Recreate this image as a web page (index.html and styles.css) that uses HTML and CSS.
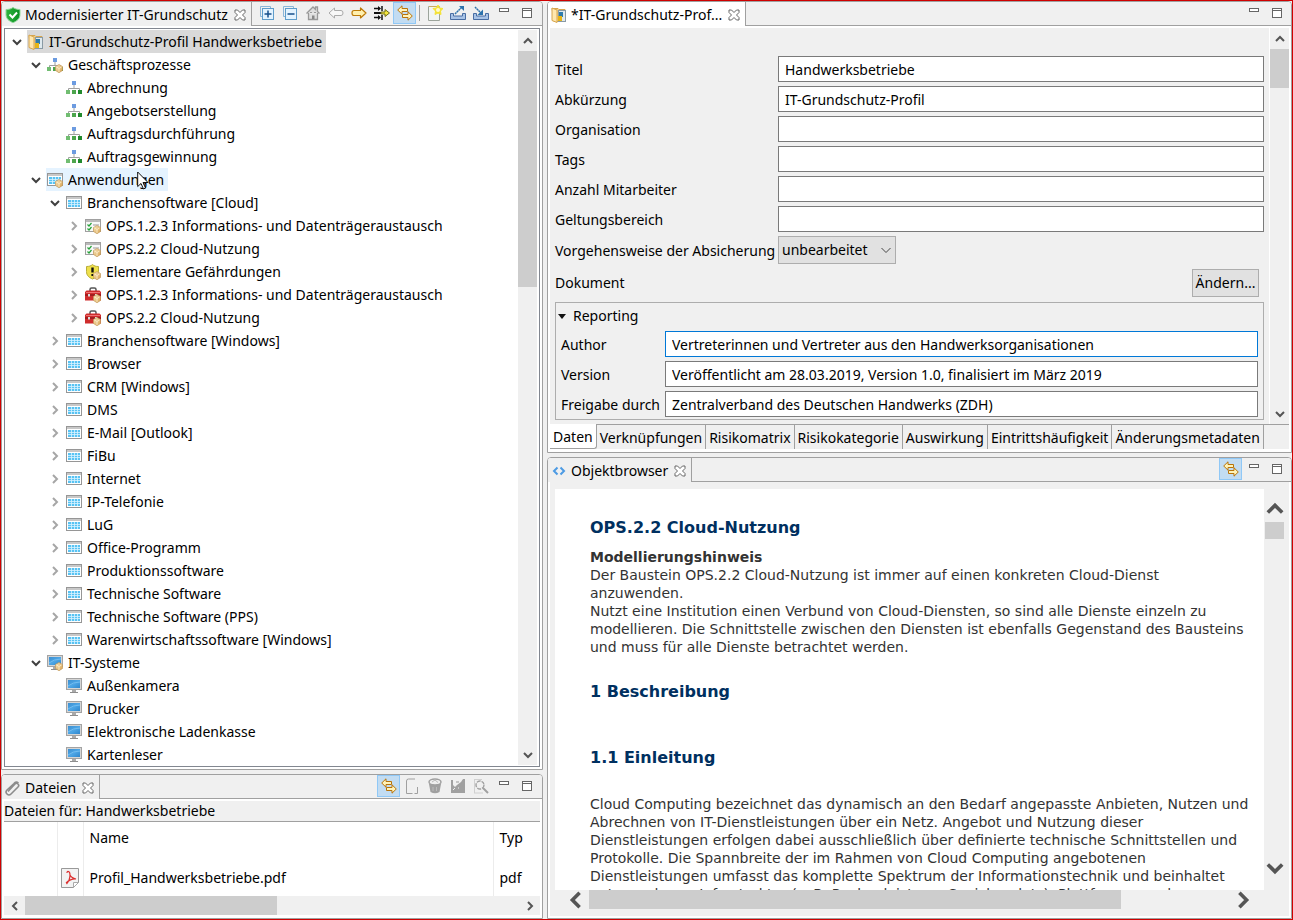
FILE: index.html
```html
<!DOCTYPE html>
<html lang="de">
<head>
<meta charset="utf-8">
<title>Modernisierter IT-Grundschutz</title>
<link rel="stylesheet" href="styles.css">
</head>
<body>
<svg class="sprite" aria-hidden="true">
  <defs>
    <linearGradient id="g-screen" x1="0" y1="0" x2="1" y2="1"><stop offset="0" stop-color="#3d8fd0"/><stop offset=".5" stop-color="#4da6e6"/><stop offset="1" stop-color="#2f86cc"/></linearGradient>
    <linearGradient id="g-gold" x1="0" y1="0" x2="1" y2="1"><stop offset="0" stop-color="#f9e8c0"/><stop offset="1" stop-color="#d6a04c"/></linearGradient>
    <linearGradient id="g-green" x1="0" y1="0" x2="1" y2="0"><stop offset="0" stop-color="#2fb53f"/><stop offset="1" stop-color="#0b8f22"/></linearGradient>
  </defs>
  <symbol id="i-group" viewBox="0 0 16 16"><path d="M12 7.500l3.500 2v4L12 15.700l-3.500-2.200v-4z" fill="url(#g-gold)" stroke="#c39a5a" stroke-width=".7" stroke-linejoin="round"/><path d="M9.500 10l2.500 1.500 2.500-1.500M12 11.500V15" stroke="#fff3d6" stroke-width=".8" fill="none"/></symbol>
  <symbol id="i-shield" viewBox="0 0 16 16"><path d="M8 .5C6 2 3.500 2.500 1 2.500v5C1 11.500 4 14 8 15.700 12 14 15 11.500 15 7.500v-5C12.500 2.500 10 2 8 .5z" fill="url(#g-green)" stroke="#8fd59a"/><path d="M4.500 7.500l3 3 4.500-5" fill="none" stroke="#fff" stroke-width="2"/></symbol>
  <symbol id="i-folder" viewBox="0 0 16 16"><path d="M1 1.500h6l1 1h6v12H3z" fill="#f2cf82" stroke="#d6a54e"/><rect x="7.500" y="3.500" width="7" height="11" fill="#dfe9ee" stroke="#8a9aa4"/><rect x="8" y="5" width="4" height="5" fill="#2f7cab"/><rect x="7" y="9" width="4" height="5" fill="#e6b416"/><path d="M1 1l5 2v12.500l-5-2z" fill="#ffe7ae" stroke="#d6a54e"/></symbol>
  <symbol id="i-proc" viewBox="0 0 16 16"><path d="M8 4v5M2.500 11V8.500h11V11" fill="none" stroke="#a0a0a0"/><rect x="6" y="1" width="4" height="4" fill="#6c9be0"/><rect x="0" y="10" width="4" height="4" fill="#71bd71"/><rect x="6" y="10" width="4" height="4" fill="#4da54d"/><rect x="12" y="10" width="4" height="4" fill="#218a2d"/></symbol>
  <symbol id="i-app" viewBox="0 0 16 16"><rect x=".5" y="1.500" width="15" height="12" fill="#fff" stroke="#969696"/><path d="M1 3h14" stroke="#c8c8c8" stroke-width="2"/><path d="M2 5h12v7H2z" fill="#58c3f3"/><path d="M2 7.500h12M2 9.500h12M5.500 5V12M8.500 5V12M11.500 5V12" stroke="#d8f2ff" stroke-width=".8"/></symbol>
  <symbol id="i-check" viewBox="0 0 16 16"><rect x=".5" y="1.500" width="15" height="12" fill="#f8f8f8" stroke="#a0a0a0"/><path d="M1 3h14" stroke="#bababa" stroke-width="2"/><path d="M2.500 6.500l1.500 1.500 2.500-3M2.500 10.500L4 12l2.500-3" fill="none" stroke="#27a33a" stroke-width="1.200"/><path d="M8 7h6M8 11h3" stroke="#999"/></symbol>
  <symbol id="i-threat" viewBox="0 0 16 16"><path d="M7.500.5C6 2 4 2.500 1.500 2.500v5c0 4 2.500 6 6 7.500 3.500-1.500 6-3.500 6-7.500v-5C11 2.500 9 2 7.500.5z" fill="#eee04c" stroke="#b9ad38"/><path d="M7.500 3.500v5" stroke="#111" stroke-width="2.400"/><path d="M7.500 10v2" stroke="#111" stroke-width="2.200"/></symbol>
  <symbol id="i-case" viewBox="0 0 16 16"><path d="M5 4.500V2.500Q5 1 6.500 1h3Q11 1 11 2.500v2" fill="none" stroke="#555" stroke-width="1.500"/><path d="M0 5l1.500-1.500h13L16 5v8.500H0z" fill="#cf2c2c"/><path d="M0 8h16" stroke="#811717" stroke-width="1.200"/><path d="M1 5.500h14" stroke="#ee7272"/><path d="M3 7h2v2.500H3zM10 7h2v2.500h-2z" fill="#ddd"/></symbol>
  <symbol id="i-pc" viewBox="0 0 16 16"><rect x=".5" y=".5" width="15" height="11" fill="#d5d5d5" stroke="#a3a3a3"/><rect x="2" y="2" width="12" height="8" fill="url(#g-screen)"/><path d="M2 8Q7 4 14 4" stroke="#74bdf0" fill="none"/><path d="M6 12h4v2H6z" fill="#aaa"/><path d="M4 14.500h8" stroke="#8e8e8e"/></symbol>
  <symbol id="i-close" viewBox="0 0 12 12"><path d="M1 1h2.500L6 3.500 8.500 1H11v2.500L8.500 6 11 8.500V11H8.500L6 8.500 3.500 11H1V8.500L3.500 6 1 3.500z" fill="#fff" stroke="#666"/></symbol>
  <symbol id="i-expand" viewBox="0 0 16 16"><path d="M1.500 11.500v-10h10v2M1.500 11.500h2" fill="none" stroke="#8ab6d9"/><rect x="3.500" y="3.500" width="11" height="11" fill="#e3f3ff" stroke="#5f9dcb"/><path d="M5.500 9h7M9 5.500v7" stroke="#164f8c" stroke-width="1.500"/></symbol>
  <symbol id="i-collapse" viewBox="0 0 16 16"><path d="M1.500 11.500v-10h10v2M1.500 11.500h2" fill="none" stroke="#8ab6d9"/><rect x="3.500" y="3.500" width="11" height="11" fill="#e3f3ff" stroke="#5f9dcb"/><path d="M5.500 9h7" stroke="#164f8c" stroke-width="1.500"/></symbol>
  <symbol id="i-home" viewBox="0 0 16 16"><path d="M1.500 8.500L8 2l2.500 2.500V2h2v4.500l2 2M3.500 8v6.500h9V8" fill="#dedede" stroke="#999" stroke-width="1.300"/><path d="M7 14v-3.500h2.500V14" fill="#888"/><path d="M5 7.500h2M9 7.500h2" stroke="#999"/></symbol>
  <symbol id="i-back" viewBox="0 0 16 16"><path d="M1 8l5.500-5V5.500H13q2 0 2 2.500t-2 2.500H6.500V13z" fill="#f8f8f8" stroke="#aaa" stroke-linejoin="round"/></symbol>
  <symbol id="i-fwd" viewBox="0 0 16 16"><path d="M15 8L9.500 3V5.500H3Q1 5.500 1 8t2 2.500h6.500V13z" fill="#fff0ae" stroke="#bd7a08" stroke-width="1.200" stroke-linejoin="round"/></symbol>
  <symbol id="i-filter" viewBox="0 0 16 16"><path d="M0 3.500h6M0 12.500h6M8 1v5M8 10v5" stroke="#111" stroke-width="1.500"/><path d="M4 1l3 2.500L4 6zM4 10l3 2.500L4 15z" fill="#111"/><path d="M0 8h8" stroke="#111" stroke-width="2"/><path d="M7 7h4V4.500L15.500 8 11 11.500V9H7z" fill="#f3e63d" stroke="#6c6a19"/></symbol>
  <symbol id="i-link" viewBox="0 0 16 16"><path d="M.7 5L5 .8v2.700h5.500v3H5v2.700z" fill="#fff3b8" stroke="#b8730a" stroke-linejoin="round"/><path d="M15.300 11L11 6.800v2.700H5.500v3H11v2.700z" fill="#fff3b8" stroke="#b8730a" stroke-linejoin="round"/></symbol>
  <symbol id="i-new" viewBox="0 0 16 16"><path d="M1.500 1.500h11v14h-11z" fill="#f2f5f3" stroke="#9ca49c"/><path d="M2 1.500h8" stroke="#c8ab61"/><path d="M11 0l1.500 3 3.500.5-2.500 2.500.5 3.500-3-1.500L8 9.500 8.500 6 6 3.500 9.500 3z" fill="#f4e234" stroke="#f4e234"/><circle cx="11" cy="5" r="2" fill="#fffbd0"/></symbol>
  <symbol id="i-export" viewBox="0 0 16 16"><path d="M.5 8.500h3V11h9V8.500h3v6H.5z" fill="#a8c3e6" stroke="#496da3"/><path d="M5 9l7-7" stroke="#2c72ac" stroke-width="1.500" stroke-dasharray="2 .5"/><path d="M9 1h5v5z" fill="#2c72ac"/></symbol>
  <symbol id="i-import" viewBox="0 0 16 16"><path d="M.5 8.500h3V11h9V8.500h3v6H.5z" fill="#a8c3e6" stroke="#496da3"/><path d="M2 2l6 6" stroke="#2c72ac" stroke-width="1.500" stroke-dasharray="2 .5"/><path d="M10 4.500V10H4.500z" fill="#2c72ac"/></symbol>
  <symbol id="i-min" viewBox="0 0 16 16"><rect x="3.500" y="3.500" width="9" height="3" fill="#fff" stroke="#666"/></symbol>
  <symbol id="i-max" viewBox="0 0 16 16"><rect x="3.500" y="3.500" width="9" height="9" fill="#fff" stroke="#666"/><path d="M3 5.500h10" stroke="#666"/></symbol>
  <symbol id="i-clip" viewBox="0 0 16 16"><path d="M3 11.500l7-7.500q1.500-1.500 3 0t0 3l-7 7q-2 2-4 0t0-4L9 3.500q2-2.500 4.500-.5" fill="none" stroke="#8c8c8c" stroke-width="1.600"/></symbol>
  <symbol id="i-page" viewBox="0 0 16 16"><path d="M2.500 15.500V3q0-2 2-2H11M2.500 15.500h6M10.500 15.500h3V9" fill="none" stroke="#a0a0a0"/></symbol>
  <symbol id="i-trash" viewBox="0 0 16 16"><path d="M2 6h12l-1.500 8q-4.500 2.500-9 0z" fill="#a0a0a0"/><ellipse cx="8" cy="4" rx="6" ry="3" fill="#eee" stroke="#a0a0a0" stroke-width="1.500"/><path d="M5 4l3-2 3 2.500M6 9v4M9.500 9v4" stroke="#bbb" fill="none"/></symbol>
  <symbol id="i-chart" viewBox="0 0 16 16"><path d="M1 2v13h14V1h-2l-2 3-4 3-2 2-2-2V2z" fill="#a0a0a0"/><path d="M6 3h3v2H6z" fill="#c4c4c4"/><path d="M3 12l2-2M8 10h1" stroke="#eee"/></symbol>
  <symbol id="i-search" viewBox="0 0 16 16"><path d="M1.500 1v14M1 1.500h8M1 15h9" stroke="#d0d0d0"/><circle cx="7" cy="7" r="4" fill="none" stroke="#a0a0a0" stroke-width="1.400" stroke-dasharray="4 1"/><path d="M10 10l5 5" stroke="#a0a0a0" stroke-width="2"/></symbol>
  <symbol id="i-code" viewBox="0 0 16 16"><path d="M6.500 4.500L3 8l3.500 3.500M9.500 4.500L13 8l-3.500 3.500" fill="none" stroke="#4d9be4" stroke-width="2"/></symbol>
  <symbol id="i-pdf" viewBox="0 0 18 20"><path d="M.5.5h17v14l-5 5H.5z" fill="#f3f3f3" stroke="#999"/><path d="M12.500 19.500v-5h5z" fill="#fff" stroke="#aaa"/><path d="M6 5q0-2 1.500-1.500T9 7q1.500 3 6 4-5-.5-10 4M9 7q0 5-3.500 9" fill="none" stroke="#dc3030" stroke-width="1.200"/></symbol>
  <symbol id="i-cursor" viewBox="0 0 12 19"><path d="M.7 1v14.500l3.300-3 2.500 5.500 2-1L6 11.500h5z" fill="#fff" stroke="#111"/></symbol>
  <symbol id="i-chev" viewBox="0 0 10 10"><path d="M1 3l4 4 4-4" fill="none" stroke="currentColor" stroke-width="2"/></symbol>
  <symbol id="i-chev-thin" viewBox="0 0 10 10"><path d="M.5 3L5 7.500 9.500 3" fill="none" stroke="currentColor"/></symbol>
</svg>

<main class="workbench">
  <div class="column column-left">
    <section class="part">
      <header class="part-head">
        <div class="tab">
          <svg class="icon"><use href="#i-shield"/></svg><span>Modernisierter IT-Grundschutz</span>
          <button class="close" aria-label="Schließen"><svg><use href="#i-close"/></svg></button>
        </div>
        <div class="tools">
          <button aria-label="Alle aufklappen"><svg class="icon"><use href="#i-expand"/></svg></button>
          <button aria-label="Alle zuklappen"><svg class="icon"><use href="#i-collapse"/></svg></button>
          <button aria-label="Start"><svg class="icon"><use href="#i-home"/></svg></button>
          <button aria-label="Zurück"><svg class="icon"><use href="#i-back"/></svg></button>
          <button aria-label="Vorwärts"><svg class="icon"><use href="#i-fwd"/></svg></button>
          <button aria-label="Filter"><svg class="icon"><use href="#i-filter"/></svg></button>
          <button class="on" aria-label="Mit Editor verknüpfen"><svg class="icon"><use href="#i-link"/></svg></button>
          <span class="sep"></span>
          <button aria-label="Neu"><svg class="icon"><use href="#i-new"/></svg></button>
          <button aria-label="Exportieren"><svg class="icon"><use href="#i-export"/></svg></button>
          <button aria-label="Importieren"><svg class="icon"><use href="#i-import"/></svg></button>
          <button aria-label="Minimieren"><svg class="icon"><use href="#i-min"/></svg></button>
          <button aria-label="Maximieren"><svg class="icon"><use href="#i-max"/></svg></button>
        </div>
      </header>
      <div class="tree-box">
        <ul class="tree">
          <li><button class="twist open" aria-label="Zuklappen"><svg><use href="#i-chev"/></svg></button><span class="item selected"><svg class="icon"><use href="#i-folder"/></svg>IT-Grundschutz-Profil Handwerksbetriebe</span></li>
          <li class="l1"><button class="twist open" aria-label="Zuklappen"><svg><use href="#i-chev"/></svg></button><span class="item"><svg class="icon"><use href="#i-proc"/><use href="#i-group"/></svg>Geschäftsprozesse</span></li>
          <li class="l2 leaf"><span class="item"><svg class="icon"><use href="#i-proc"/></svg>Abrechnung</span></li>
          <li class="l2 leaf"><span class="item"><svg class="icon"><use href="#i-proc"/></svg>Angebotserstellung</span></li>
          <li class="l2 leaf"><span class="item"><svg class="icon"><use href="#i-proc"/></svg>Auftragsdurchführung</span></li>
          <li class="l2 leaf"><span class="item"><svg class="icon"><use href="#i-proc"/></svg>Auftragsgewinnung</span></li>
          <li class="l1"><button class="twist open" aria-label="Zuklappen"><svg><use href="#i-chev"/></svg></button><span class="item hover"><svg class="icon"><use href="#i-app"/><use href="#i-group"/></svg>Anwendungen<svg class="cursor"><use href="#i-cursor"/></svg></span></li>
          <li class="l2"><button class="twist open" aria-label="Zuklappen"><svg><use href="#i-chev"/></svg></button><span class="item"><svg class="icon"><use href="#i-app"/></svg>Branchensoftware [Cloud]</span></li>
          <li class="l3"><button class="twist" aria-label="Aufklappen"><svg><use href="#i-chev"/></svg></button><span class="item"><svg class="icon"><use href="#i-check"/><use href="#i-group"/></svg>OPS.1.2.3 Informations- und Datenträgeraustausch</span></li>
          <li class="l3"><button class="twist" aria-label="Aufklappen"><svg><use href="#i-chev"/></svg></button><span class="item"><svg class="icon"><use href="#i-check"/><use href="#i-group"/></svg>OPS.2.2 Cloud-Nutzung</span></li>
          <li class="l3"><button class="twist" aria-label="Aufklappen"><svg><use href="#i-chev"/></svg></button><span class="item"><svg class="icon"><use href="#i-threat"/><use href="#i-group"/></svg>Elementare Gefährdungen</span></li>
          <li class="l3"><button class="twist" aria-label="Aufklappen"><svg><use href="#i-chev"/></svg></button><span class="item"><svg class="icon"><use href="#i-case"/><use href="#i-group"/></svg>OPS.1.2.3 Informations- und Datenträgeraustausch</span></li>
          <li class="l3"><button class="twist" aria-label="Aufklappen"><svg><use href="#i-chev"/></svg></button><span class="item"><svg class="icon"><use href="#i-case"/><use href="#i-group"/></svg>OPS.2.2 Cloud-Nutzung</span></li>
          <li class="l2"><button class="twist" aria-label="Aufklappen"><svg><use href="#i-chev"/></svg></button><span class="item"><svg class="icon"><use href="#i-app"/></svg>Branchensoftware [Windows]</span></li>
          <li class="l2"><button class="twist" aria-label="Aufklappen"><svg><use href="#i-chev"/></svg></button><span class="item"><svg class="icon"><use href="#i-app"/></svg>Browser</span></li>
          <li class="l2"><button class="twist" aria-label="Aufklappen"><svg><use href="#i-chev"/></svg></button><span class="item"><svg class="icon"><use href="#i-app"/></svg>CRM [Windows]</span></li>
          <li class="l2"><button class="twist" aria-label="Aufklappen"><svg><use href="#i-chev"/></svg></button><span class="item"><svg class="icon"><use href="#i-app"/></svg>DMS</span></li>
          <li class="l2"><button class="twist" aria-label="Aufklappen"><svg><use href="#i-chev"/></svg></button><span class="item"><svg class="icon"><use href="#i-app"/></svg>E-Mail [Outlook]</span></li>
          <li class="l2"><button class="twist" aria-label="Aufklappen"><svg><use href="#i-chev"/></svg></button><span class="item"><svg class="icon"><use href="#i-app"/></svg>FiBu</span></li>
          <li class="l2"><button class="twist" aria-label="Aufklappen"><svg><use href="#i-chev"/></svg></button><span class="item"><svg class="icon"><use href="#i-app"/></svg>Internet</span></li>
          <li class="l2"><button class="twist" aria-label="Aufklappen"><svg><use href="#i-chev"/></svg></button><span class="item"><svg class="icon"><use href="#i-app"/></svg>IP-Telefonie</span></li>
          <li class="l2"><button class="twist" aria-label="Aufklappen"><svg><use href="#i-chev"/></svg></button><span class="item"><svg class="icon"><use href="#i-app"/></svg>LuG</span></li>
          <li class="l2"><button class="twist" aria-label="Aufklappen"><svg><use href="#i-chev"/></svg></button><span class="item"><svg class="icon"><use href="#i-app"/></svg>Office-Programm</span></li>
          <li class="l2"><button class="twist" aria-label="Aufklappen"><svg><use href="#i-chev"/></svg></button><span class="item"><svg class="icon"><use href="#i-app"/></svg>Produktionssoftware</span></li>
          <li class="l2"><button class="twist" aria-label="Aufklappen"><svg><use href="#i-chev"/></svg></button><span class="item"><svg class="icon"><use href="#i-app"/></svg>Technische Software</span></li>
          <li class="l2"><button class="twist" aria-label="Aufklappen"><svg><use href="#i-chev"/></svg></button><span class="item"><svg class="icon"><use href="#i-app"/></svg>Technische Software (PPS)</span></li>
          <li class="l2"><button class="twist" aria-label="Aufklappen"><svg><use href="#i-chev"/></svg></button><span class="item"><svg class="icon"><use href="#i-app"/></svg>Warenwirtschaftssoftware [Windows]</span></li>
          <li class="l1"><button class="twist open" aria-label="Zuklappen"><svg><use href="#i-chev"/></svg></button><span class="item"><svg class="icon"><use href="#i-pc"/><use href="#i-group"/></svg>IT-Systeme</span></li>
          <li class="l2 leaf"><span class="item"><svg class="icon"><use href="#i-pc"/></svg>Außenkamera</span></li>
          <li class="l2 leaf"><span class="item"><svg class="icon"><use href="#i-pc"/></svg>Drucker</span></li>
          <li class="l2 leaf"><span class="item"><svg class="icon"><use href="#i-pc"/></svg>Elektronische Ladenkasse</span></li>
          <li class="l2 leaf"><span class="item"><svg class="icon"><use href="#i-pc"/></svg>Kartenleser</span></li>
        </ul>
        <div class="scroll scroll-v">
          <button class="up" aria-label="Nach oben"><svg><use href="#i-chev"/></svg></button>
          <div class="track"><div class="thumb thumb-tree"></div></div>
          <button aria-label="Nach unten"><svg><use href="#i-chev"/></svg></button>
        </div>
      </div>
    </section>

    <section class="part">
      <header class="part-head">
        <div class="tab">
          <svg class="icon"><use href="#i-clip"/></svg><span>Dateien</span>
          <button class="close" aria-label="Schließen"><svg><use href="#i-close"/></svg></button>
        </div>
        <div class="tools">
          <button class="on" aria-label="Mit Auswahl verknüpfen"><svg class="icon"><use href="#i-link"/></svg></button>
          <button aria-label="Neue Datei"><svg class="icon"><use href="#i-page"/></svg></button>
          <button aria-label="Löschen"><svg class="icon"><use href="#i-trash"/></svg></button>
          <button aria-label="Speichern"><svg class="icon"><use href="#i-chart"/></svg></button>
          <button aria-label="Suchen"><svg class="icon"><use href="#i-search"/></svg></button>
          <button aria-label="Minimieren"><svg class="icon"><use href="#i-min"/></svg></button>
          <button aria-label="Maximieren"><svg class="icon"><use href="#i-max"/></svg></button>
        </div>
      </header>
      <div class="files">
        <p class="files-for">Dateien für: Handwerksbetriebe</p>
        <table>
          <colgroup><col class="c-blank"><col class="c-icon"><col><col class="c-type"></colgroup>
          <thead><tr><th></th><th></th><th>Name</th><th>Typ</th></tr></thead>
          <tbody><tr><td></td><td><svg class="pdf"><use href="#i-pdf"/></svg></td><td>Profil_Handwerksbetriebe.pdf</td><td>pdf</td></tr></tbody>
        </table>
        <div class="scroll scroll-h">
          <button class="left" aria-label="Nach links"><svg><use href="#i-chev"/></svg></button>
          <div class="track"><div class="thumb thumb-files"></div></div>
          <button class="right" aria-label="Nach rechts"><svg><use href="#i-chev"/></svg></button>
        </div>
      </div>
    </section>
  </div>

  <div class="column column-right">
    <section class="part">
      <header class="part-head">
        <div class="tab tab-white">
          <svg class="icon"><use href="#i-folder"/></svg><span>*IT-Grundschutz-Prof...</span>
          <button class="close" aria-label="Schließen"><svg><use href="#i-close"/></svg></button>
        </div>
        <div class="tools">
          <button aria-label="Minimieren"><svg class="icon"><use href="#i-min"/></svg></button>
          <button aria-label="Maximieren"><svg class="icon"><use href="#i-max"/></svg></button>
        </div>
      </header>
      <div class="editor">
        <form class="form">
          <div class="field"><label for="titel">Titel</label><input id="titel" type="text" value="Handwerksbetriebe"></div>
          <div class="field"><label for="abk">Abkürzung</label><input id="abk" type="text" value="IT-Grundschutz-Profil"></div>
          <div class="field"><label for="org">Organisation</label><input id="org" type="text"></div>
          <div class="field"><label for="tags">Tags</label><input id="tags" type="text"></div>
          <div class="field"><label for="anzahl">Anzahl Mitarbeiter</label><input id="anzahl" type="text"></div>
          <div class="field"><label for="geltung">Geltungsbereich</label><input id="geltung" type="text"></div>
          <div class="field field-combo"><label for="vorgehen">Vorgehensweise der Absicherung</label><span class="combo"><select id="vorgehen"><option>unbearbeitet</option></select><svg><use href="#i-chev-thin"/></svg></span></div>
          <div class="field field-doc"><span>Dokument</span><button type="button" class="push">Ändern...</button></div>
          <div class="group">
            <button type="button" class="group-title"><span class="caret"></span>Reporting</button>
            <div class="field"><label for="author">Author</label><input id="author" class="focused" type="text" value="Vertreterinnen und Vertreter aus den Handwerksorganisationen"></div>
            <div class="field"><label for="version">Version</label><input id="version" type="text" value="Veröffentlicht am 28.03.2019, Version 1.0, finalisiert im März 2019"></div>
            <div class="field"><label for="freigabe">Freigabe durch</label><input id="freigabe" type="text" value="Zentralverband des Deutschen Handwerks (ZDH)"></div>
          </div>
        </form>
        <div class="scroll scroll-v">
          <button class="up" aria-label="Nach oben"><svg><use href="#i-chev"/></svg></button>
          <div class="track"><div class="thumb thumb-form"></div></div>
          <button aria-label="Nach unten"><svg><use href="#i-chev"/></svg></button>
        </div>
      </div>
      <nav class="pages">
        <button class="active">Daten</button><button>Verknüpfungen</button><button>Risikomatrix</button><button>Risikokategorie</button><button>Auswirkung</button><button>Eintrittshäufigkeit</button><button>Änderungsmetadaten</button>
      </nav>
    </section>

    <section class="part">
      <header class="part-head">
        <div class="tab">
          <svg class="icon"><use href="#i-code"/></svg><span>Objektbrowser</span>
          <button class="close" aria-label="Schließen"><svg><use href="#i-close"/></svg></button>
        </div>
        <div class="tools">
          <button class="on" aria-label="Mit Editor verknüpfen"><svg class="icon"><use href="#i-link"/></svg></button>
          <button aria-label="Minimieren"><svg class="icon"><use href="#i-min"/></svg></button>
          <button aria-label="Maximieren"><svg class="icon"><use href="#i-max"/></svg></button>
        </div>
      </header>
      <div class="browser">
        <article class="doc">
          <h1>OPS.2.2 Cloud-Nutzung</h1>
          <h2>Modellierungshinweis</h2>
          <p>Der Baustein OPS.2.2 Cloud-Nutzung ist immer auf einen konkreten Cloud-Dienst anzuwenden.<br>Nutzt eine Institution einen Verbund von Cloud-Diensten, so sind alle Dienste einzeln zu modellieren. Die Schnittstelle zwischen den Diensten ist ebenfalls Gegenstand des Bausteins und muss für alle Dienste betrachtet werden.</p>
          <h1>1 Beschreibung</h1>
          <h1>1.1 Einleitung</h1>
          <p>Cloud Computing bezeichnet das dynamisch an den Bedarf angepasste Anbieten, Nutzen und Abrechnen von IT-Dienstleistungen über ein Netz. Angebot und Nutzung dieser Dienstleistungen erfolgen dabei ausschließlich über definierte technische Schnittstellen und Protokolle. Die Spannbreite der im Rahmen von Cloud Computing angebotenen Dienstleistungen umfasst das komplette Spektrum der Informationstechnik und beinhaltet unter anderem Infrastruktur (z. B. Rechenleistung, Speicherplatz), Plattformen und</p>
        </article>
        <div class="scroll scroll-v large">
          <button class="up" aria-label="Nach oben"><svg><use href="#i-chev"/></svg></button>
          <div class="track"><div class="thumb thumb-doc-v"></div></div>
          <button aria-label="Nach unten"><svg><use href="#i-chev"/></svg></button>
        </div>
        <div class="scroll scroll-h large">
          <button class="left" aria-label="Nach links"><svg><use href="#i-chev"/></svg></button>
          <div class="track"><div class="thumb thumb-doc-h"></div></div>
          <button class="right" aria-label="Nach rechts"><svg><use href="#i-chev"/></svg></button>
        </div>
      </div>
    </section>
  </div>
</main>
</body>
</html>
```
FILE: styles.css
```css
* { box-sizing: border-box; }

body {
  margin: 0;
  background: #f0f0f0;
  color: #000;
  font: 14px/20px "Noto Sans", "Open Sans", sans-serif;
}

button, input, select { font: inherit; color: inherit; }
button { border: 0; padding: 0; background: none; }
ul, p, h1, h2 { margin: 0; padding: 0; }
svg { display: block; flex: none; }

.sprite { position: absolute; width: 0; height: 0; }
.icon { width: 16px; height: 16px; }

.workbench {
  display: grid;
  grid-template-columns: 542fr 745fr;
  gap: 4px;
  height: 100vh;
  border: 1px solid #d00000;
}
.column { display: grid; gap: 4px; min-width: 0; min-height: 0; }
.column-left { grid-template-rows: 769fr 145fr; }
.column-right { grid-template-rows: 452fr 462fr; }

.part {
  display: flex;
  flex-direction: column;
  min-width: 0;
  min-height: 0;
  overflow: hidden;
  border: 1px solid #a0a0a0;
  border-radius: 4px 4px 0 0;
  background: #fff;
}

/* Part header */
.part-head {
  display: flex;
  flex: none;
  height: 24px;
  border-bottom: 1px solid #a0a0a0;
  background: #f0f0f0;
}
.tab {
  display: flex;
  align-items: center;
  gap: 4px;
  height: 24px;
  padding: 1px 5px 0 3px;
  border-right: 1px solid #a0a0a0;
  background: #f0f0f0;
  white-space: nowrap;
}
.tab-white { background: #fff; }
.close { margin-left: 2px; }
.close svg { width: 12px; height: 12px; }
.tools { display: flex; margin-left: auto; padding-right: 3px; }
.column-left .tools { padding-right: 4px; }
.tools button {
  display: grid;
  place-items: center;
  width: 23px;
  height: 22px;
}
.tools .on { border: 1px solid #90c8f6; background: #c2dcf2; }
.sep { width: 1px; height: 16px; margin: 3px; background: #a0a0a0; }

/* Scroll bars */
.scroll { display: flex; flex: none; background: #f0f0f0; color: #555; }
.scroll-v { flex-direction: column; width: 19px; }
.scroll-h { height: 19px; }
.scroll button { display: grid; flex: none; place-items: center; }
.scroll-v button { height: 21px; }
.scroll-h button { width: 21px; }
.scroll svg { width: 10px; height: 10px; }
.large svg { width: 18px; height: 18px; }
.scroll-v.large button { height: 26px; }
.scroll-h.large button { width: 26px; }
.up svg { transform: rotate(180deg); }
.left svg { transform: rotate(90deg); }
.right svg { transform: rotate(-90deg); }
.track { flex: 1; }
.thumb { background: #cdcdcd; }
.scroll-h .thumb { height: 100%; }
.thumb-tree { height: 34%; }
.thumb-form { height: 11%; }
.thumb-doc-v { height: 5%; }
.thumb-files { width: 51%; }
.thumb-doc-h { width: 83%; }

/* Tree */
.tree-box {
  display: flex;
  flex: 1;
  min-height: 0;
  margin: 2px;
  padding: 1px 2px 1px 1px;
  border: 1px solid #828790;
  background: #fff;
}
.tree { flex: 1; overflow: hidden; list-style: none; }
.tree li { display: flex; height: 23px; }
.tree .l1 { padding-left: 19px; }
.tree .l2 { padding-left: 38px; }
.tree .l3 { padding-left: 57px; }
.tree .leaf { padding-left: 59px; }
.twist { display: grid; place-items: center; width: 21px; color: #a6a6a6; }
.twist svg { width: 10px; height: 10px; transform: rotate(-90deg); }
.twist.open { color: #404040; }
.twist.open svg { transform: none; }
.item {
  display: flex;
  position: relative;
  align-items: center;
  gap: 5px;
  padding: 0 4px 0 1px;
  white-space: nowrap;
}
.selected { background: #d9d9d9; }
.hover { background: #e5f3ff; }
.cursor { position: absolute; left: 91px; top: 3px; width: 12px; height: 19px; }

/* Files */
.files { display: flex; flex: 1; flex-direction: column; min-height: 0; margin: 2px 2px 3px; }
.files-for { height: 21px; padding-top: 1px; border-bottom: 1px solid #a0a0a0; background: #f0f0f0; line-height: 18px; }
.files table {
  flex: 1;
  display: table;
  width: 100%;
  border-collapse: collapse;
  table-layout: fixed;
  background: #fff;
}
.files th, .files td {
  padding: 2px 6px 0;
  border-right: 1px solid #ececec;
  font-weight: normal;
  text-align: left;
}
.files th:last-child, .files td:last-child { border-right: 0; }
.files th { height: 29px; }
.files td { height: 44px; padding-top: 8px; }
.files td:nth-child(2) { padding-left: 3px; padding-right: 3px; }
.c-blank { width: 53px; }
.c-icon { width: 26px; }
.c-type { width: 47px; }
.pdf { width: 18px; height: 20px; }

/* Editor form */
.editor { display: flex; flex: 1; min-height: 0; margin: 2px 2px 0; }
.editor .scroll { width: 20px; border-left: 1px solid #fff; }
.form { flex: 1; min-width: 0; padding: 28px 5px 0; overflow: hidden; background: #f0f0f0; }
.field {
  display: grid;
  grid-template-columns: 218px 1fr;
  align-items: center;
  gap: 5px;
  height: 26px;
  margin-bottom: 4px;
  white-space: nowrap;
}
.field label { padding-top: 1px; }
.field input {
  width: 100%;
  height: 26px;
  padding: 0 6px;
  border: 1px solid #7a7a7a;
  background: #fff;
  outline: 0;
}
.field input.focused { border-color: #0078d7; }
.field-combo { height: 28px; }
.combo { display: flex; position: relative; width: 118px; height: 28px; }
.combo select {
  width: 100%;
  padding: 0 3px;
  appearance: none;
  border: 1px solid #adadad;
  border-radius: 0;
  background: #e1e1e1;
}
.combo svg { position: absolute; right: 5px; top: 9px; width: 10px; height: 10px; color: #444; }
.field-doc { display: flex; justify-content: space-between; height: 28px; margin: 5px 5px; margin-left: 0; }
.push { width: 67px; height: 28px; border: 1px solid #adadad; background: #e1e1e1; }
.group { padding: 3px 5px 2px; border: 1px solid #adadad; }
.group .field { grid-template-columns: 99px 1fr; }
.group .field:last-child { margin-bottom: 0; }
.group-title { display: flex; align-items: center; gap: 7px; height: 20px; margin: 0 0 5px -3px; }
.caret { border: 4px solid transparent; border-top: 5px solid #111; border-bottom: 0; }

.pages { display: flex; flex: none; height: 25px; margin: 0 2px 3px; border-top: 1px solid #a0a0a0; background: #f0f0f0; }
.pages button { padding: 1px 3px 0; border-right: 1px solid #a0a0a0; white-space: nowrap; }
.pages .active { margin-top: -1px; border-bottom: 1px solid #a0a0a0; border-radius: 0 0 3px 0; background: #fff; }

/* Object browser */
.browser {
  display: grid;
  flex: 1;
  grid-template: minmax(0, 1fr) 20px / minmax(0, 1fr) 20px;
  min-height: 0;
  margin: 0 2px 2px;
  padding: 7px 5px 6px;
  background: #f0f0f0;
}
.doc {
  padding: 27px 12px 0 35px;
  overflow: hidden;
  background: #fff;
  color: #333;
  font: 14px/18px "DejaVu Sans", Verdana, sans-serif;
}
.doc h1 { margin-bottom: 42px; color: #003060; font-size: 16px; line-height: 24px; }
.doc h1:first-child { margin-bottom: 8px; }
.doc h2 { font-size: 14px; line-height: 18px; }
.doc p + h1 { margin-top: 24px; }
.doc h1 + p { margin-top: -17px; }
.browser .scroll-v { margin: 7px 0 9px 1px; }
.browser .scroll-h { margin: 0 8px; }
```
